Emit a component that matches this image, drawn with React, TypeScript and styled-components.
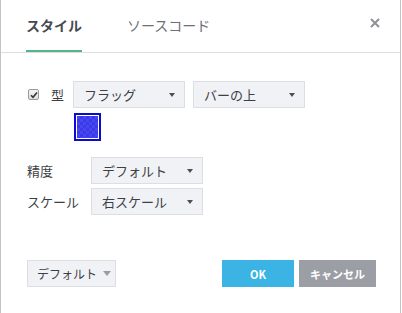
import React from 'react';
import styled, { createGlobalStyle } from 'styled-components';

const GlobalStyle = createGlobalStyle`
  html, body {
    margin: 0;
    padding: 0;
    background: #ffffff;
  }
  body {
    font-family: "Noto Sans CJK JP", "Noto Sans", "Liberation Sans", sans-serif;
    color: #3c3f45;
  }
`;

const Dialog = styled.div`
  box-sizing: border-box;
  width: 401px;
  height: 313px;
  border-left: 1px solid #c4c4c4;
  border-right: 1px solid #c4c4c4;
  background: #fff;
  display: flex;
  flex-direction: column;
`;

const Header = styled.div`
  display: flex;
  align-items: flex-start;
  height: 53px;
  box-sizing: border-box;
  padding: 0 0 0 25px;
  border-bottom: 1px solid #dcdee2;
`;

const Tab = styled.div<{ $active?: boolean }>`
  height: 50px;
  line-height: 50px;
  font-size: 14px;
  font-weight: ${p => (p.$active ? 700 : 400)};
  color: ${p => (p.$active ? '#454a53' : '#6c6f74')};
  border-bottom: 2px solid ${p => (p.$active ? '#55b586' : 'transparent')};
  margin-right: 45px;
  cursor: pointer;
`;

const Close = styled.button`
  margin-left: auto;
  margin-right: 19px;
  margin-top: 17px;
  width: 12px;
  height: 12px;
  padding: 0;
  border: none;
  background: transparent;
  display: flex;
  cursor: pointer;
`;

const Body = styled.div`
  padding: 28px 0 0 26px;
  display: flex;
  flex-direction: column;
  flex: 1;
`;

const Row = styled.div<{ $gap?: number }>`
  display: flex;
  align-items: center;
  margin-bottom: ${p => p.$gap ?? 0}px;
`;

const Check = styled.span`
  box-sizing: border-box;
  width: 11px;
  height: 11px;
  margin-left: 1px;
  border: 1px solid #9a9a9a;
  border-radius: 2px;
  background: linear-gradient(#f4f4f4, #dedede);
  display: flex;
  align-items: center;
  justify-content: center;
`;

const InlineLabel = styled.span`
  font-size: 13px;
  color: #3c3f45;
  margin: 0 9px 0 12px;
`;

const Label = styled.span`
  width: 64px;
  font-size: 13px;
  color: #3c3f45;
`;

const Select = styled.div<{ $w?: number }>`
  box-sizing: border-box;
  width: ${p => p.$w ?? 112}px;
  height: 27px;
  background: #f1f2f6;
  border: 1px solid #dcdee3;
  display: flex;
  align-items: center;
  padding: 0 9px 0 10px;
  font-size: 13px;
  color: #3c3f45;
  white-space: nowrap;
  & + & {
    margin-left: 8px;
  }
`;

const Caret = styled.span<{ $c?: string; $auto?: boolean; $size?: number }>`
  margin-left: ${p => (p.$auto === false ? '0' : 'auto')};
  width: 0;
  height: 0;
  border-left: ${p => (p.$size ?? 7) / 2}px solid transparent;
  border-right: ${p => (p.$size ?? 7) / 2}px solid transparent;
  border-top: ${p => Math.round((p.$size ?? 7) * 0.6)}px solid ${p => p.$c ?? '#4b4e54'};
`;

const Swatch = styled.div`
  box-sizing: border-box;
  margin-left: 47px;
  margin-top: 5px;
  width: 27px;
  height: 28px;
  border: 2px solid #0a0ad0;
  padding: 1px;
  background: #fff;
`;

const SwatchFill = styled.div`
  width: 100%;
  height: 100%;
  background-color: #4646f2;
  background-image:
    linear-gradient(45deg, #3a3ae6 25%, transparent 25%, transparent 75%, #3a3ae6 75%),
    linear-gradient(45deg, #3a3ae6 25%, transparent 25%, transparent 75%, #3a3ae6 75%);
  background-size: 6px 6px;
  background-position: 0 0, 3px 3px;
`;

const Footer = styled.div`
  display: flex;
  align-items: center;
  padding: 0 24px 26px 26px;
`;

const DefaultBtn = styled.div`
  box-sizing: border-box;
  width: 89px;
  height: 27px;
  background: #f1f2f6;
  border: 1px solid #dcdee3;
  display: flex;
  align-items: center;
  gap: 6px;
  padding: 0 0 0 9px;
  font-size: 12px;
  color: #3c3f45;
  white-space: nowrap;
`;

const Btn = styled.button<{ $bg: string; $w: number }>`
  box-sizing: border-box;
  width: ${p => p.$w}px;
  height: 27px;
  border: none;
  background: ${p => p.$bg};
  color: #fff;
  font-family: inherit;
  font-size: 11px;
  font-weight: 700;
  padding: 0;
  white-space: nowrap;
  cursor: pointer;
  & + & {
    margin-left: 5px;
  }
`;

const Spacer = styled.div`
  flex: 1;
`;

export default function App() {
  return (
    <>
      <GlobalStyle />
      <Dialog>
        <Header>
          <Tab $active>スタイル</Tab>
          <Tab>ソースコード</Tab>
          <Close aria-label="close">
            <svg width="12" height="12" viewBox="0 0 12 12">
              <path d="M2 2 L10 10 M10 2 L2 10" stroke="#8d9096" strokeWidth="2" />
            </svg>
          </Close>
        </Header>
        <Body>
          <Row>
            <Check>
              <svg width="8" height="8" viewBox="0 0 8 8">
                <path d="M1 4.2 L3 6.2 L7 1.5" stroke="#333" strokeWidth="1.6" fill="none" />
              </svg>
            </Check>
            <InlineLabel>型</InlineLabel>
            <Select>
              フラッグ
              <Caret />
            </Select>
            <Select>
              バーの上
              <Caret />
            </Select>
          </Row>
          <Row $gap={16}>
            <Swatch>
              <SwatchFill />
            </Swatch>
          </Row>
          <Row $gap={4}>
            <Label>精度</Label>
            <Select>
              デフォルト
              <Caret />
            </Select>
          </Row>
          <Row>
            <Label>スケール</Label>
            <Select>
              右スケール
              <Caret />
            </Select>
          </Row>
          <Spacer />
        </Body>
        <Footer>
          <DefaultBtn>
            デフォルト
            <Caret $c="#9a9ca2" $auto={false} $size={9} />
          </DefaultBtn>
          <Spacer />
          <Btn $bg="#3bb4e5" $w={72}>OK</Btn>
          <Btn $bg="#9c9ea5" $w={77}>キャンセル</Btn>
        </Footer>
      </Dialog>
    </>
  );
}
